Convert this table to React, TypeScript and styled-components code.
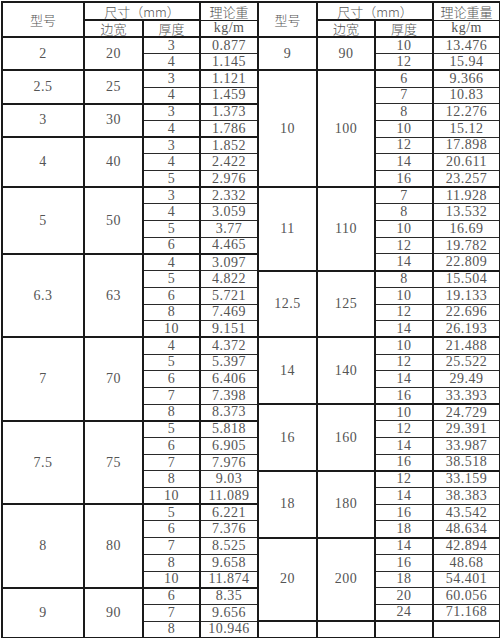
import React from 'react';
import styled, { createGlobalStyle } from 'styled-components';

type Group = { model: string; width: string; rows: [string, string][] };

const leftGroups: Group[] = [
  { model: '2', width: '20', rows: [['3', '0.877'], ['4', '1.145']] },
  { model: '2.5', width: '25', rows: [['3', '1.121'], ['4', '1.459']] },
  { model: '3', width: '30', rows: [['3', '1.373'], ['4', '1.786']] },
  { model: '4', width: '40', rows: [['3', '1.852'], ['4', '2.422'], ['5', '2.976']] },
  { model: '5', width: '50', rows: [['3', '2.332'], ['4', '3.059'], ['5', '3.77'], ['6', '4.465']] },
  { model: '6.3', width: '63', rows: [['4', '3.097'], ['5', '4.822'], ['6', '5.721'], ['8', '7.469'], ['10', '9.151']] },
  { model: '7', width: '70', rows: [['4', '4.372'], ['5', '5.397'], ['6', '6.406'], ['7', '7.398'], ['8', '8.373']] },
  { model: '7.5', width: '75', rows: [['5', '5.818'], ['6', '6.905'], ['7', '7.976'], ['8', '9.03'], ['10', '11.089']] },
  { model: '8', width: '80', rows: [['5', '6.221'], ['6', '7.376'], ['7', '8.525'], ['8', '9.658'], ['10', '11.874']] },
  { model: '9', width: '90', rows: [['6', '8.35'], ['7', '9.656'], ['8', '10.946']] },
];

const rightGroups: Group[] = [
  { model: '9', width: '90', rows: [['10', '13.476'], ['12', '15.94']] },
  {
    model: '10',
    width: '100',
    rows: [['6', '9.366'], ['7', '10.83'], ['8', '12.276'], ['10', '15.12'], ['12', '17.898'], ['14', '20.611'], ['16', '23.257']],
  },
  { model: '11', width: '110', rows: [['7', '11.928'], ['8', '13.532'], ['10', '16.69'], ['12', '19.782'], ['14', '22.809']] },
  { model: '12.5', width: '125', rows: [['8', '15.504'], ['10', '19.133'], ['12', '22.696'], ['14', '26.193']] },
  { model: '14', width: '140', rows: [['10', '21.488'], ['12', '25.522'], ['14', '29.49'], ['16', '33.393']] },
  { model: '16', width: '160', rows: [['10', '24.729'], ['12', '29.391'], ['14', '33.987'], ['16', '38.518']] },
  { model: '18', width: '180', rows: [['12', '33.159'], ['14', '38.383'], ['16', '43.542'], ['18', '48.634']] },
  { model: '20', width: '200', rows: [['14', '42.894'], ['16', '48.68'], ['18', '54.401'], ['20', '60.056'], ['24', '71.168']] },
  { model: '', width: '', rows: [['', '']] },
];

type Line = { head?: Group; first: boolean; thick: string; weight: string };

// one entry per table row, group head only on its first row
const flatten = (groups: Group[]): Line[] =>
  groups.flatMap((g) =>
    g.rows.map(([thick, weight], i) => ({ head: i === 0 ? g : undefined, first: i === 0, thick, weight }))
  );

const left = flatten(leftGroups);
const right = flatten(rightGroups);

const GlobalStyle = createGlobalStyle`
  body {
    margin: 0;
    background: #ffffff;
  }
`;

const Page = styled.div`
  padding: 1px 0 0 1px;
`;

const Sheet = styled.table`
  width: 498px;
  height: 636px;
  border-collapse: collapse;
  table-layout: fixed;
  border: 2px solid #1a1a1a;
  color: #555;
  font-family: 'Liberation Serif', 'Noto Sans CJK SC', serif;
  font-size: 14px;
  letter-spacing: 0.5px;
`;

const HeadRow = styled.tr<{ $h: number }>`
  height: ${(p) => p.$h}px;
`;

const BodyRow = styled.tr`
  height: 16.7px;
`;

const Head = styled.th<{ $thin?: boolean }>`
  padding: 0;
  font-weight: 300;
  font-size: 13px;
  line-height: 1;
  letter-spacing: 0;
  text-align: center;
  font-family: 'Noto Sans CJK SC', sans-serif;
  border: 2px solid #1a1a1a;
  ${(p) => p.$thin && 'border-bottom-width: 1px;'}
`;

const Unit = styled.th`
  padding: 0;
  font-family: 'Liberation Serif', serif;
  font-size: 14px;
  font-weight: normal;
  line-height: 1;
  text-align: center;
  border: 2px solid #1a1a1a;
  border-top-width: 1px;
`;

const Merged = styled.td`
  padding: 0;
  line-height: 1;
  text-align: center;
  border: 2px solid #1a1a1a;
`;

const Cell = styled.td<{ $first: boolean }>`
  padding: 0;
  line-height: 1;
  text-align: center;
  border-left: 2px solid #1a1a1a;
  border-right: 2px solid #1a1a1a;
  border-bottom: 1px solid #2a2a2a;
  border-top: ${(p) => (p.$first ? '2px solid #1a1a1a' : '1px solid #2a2a2a')};
`;

const widths = [82, 59, 57, 58, 59, 58, 58, 67];

const Half: React.FC<{ line: Line }> = ({ line }) => (
  <>
    {line.head && (
      <>
        <Merged rowSpan={line.head.rows.length}>{line.head.model}</Merged>
        <Merged rowSpan={line.head.rows.length}>{line.head.width}</Merged>
      </>
    )}
    <Cell $first={line.first}>{line.thick}</Cell>
    <Cell $first={line.first}>{line.weight}</Cell>
  </>
);

const App: React.FC = () => (
  <Page>
    <GlobalStyle />
    <Sheet>
      <colgroup>
        {widths.map((w, i) => (
          <col key={i} style={{ width: w }} />
        ))}
      </colgroup>
      <thead>
        <HeadRow $h={18}>
          <Head rowSpan={2}>型号</Head>
          <Head colSpan={2}>尺寸（mm）</Head>
          <Head $thin>理论重</Head>
          <Head rowSpan={2}>型号</Head>
          <Head colSpan={2}>尺寸（mm）</Head>
          <Head $thin>理论重量</Head>
        </HeadRow>
        <HeadRow $h={17}>
          <Head>边宽</Head>
          <Head>厚度</Head>
          <Unit>kg/m</Unit>
          <Head>边宽</Head>
          <Head>厚度</Head>
          <Unit>kg/m</Unit>
        </HeadRow>
      </thead>
      <tbody>
        {left.map((l, i) => (
          <BodyRow key={i}>
            <Half line={l} />
            <Half line={right[i]} />
          </BodyRow>
        ))}
      </tbody>
    </Sheet>
  </Page>
);

export default App;
